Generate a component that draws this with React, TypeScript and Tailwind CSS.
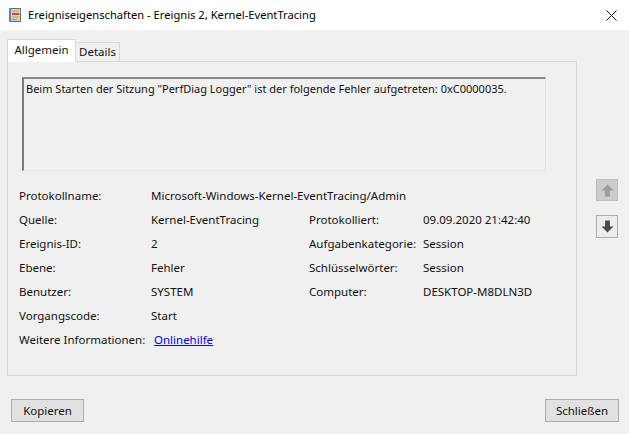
import React from "react";

const font = { fontFamily: '"Noto Sans", "Open Sans", sans-serif' };

function EventIcon() {
  return (
    <svg width="16" height="16" viewBox="0 0 16 16" className="shrink-0">
      <rect x="2.5" y="1.5" width="11" height="13" fill="#c9d3e0" stroke="#5b6e8c" />
      <rect x="2" y="1" width="2" height="14" fill="#6a7fa3" />
      <rect x="5" y="3" width="7" height="2" fill="#e8b84a" />
      <rect x="5" y="6" width="7" height="2" fill="#d9473b" />
      <rect x="5" y="9" width="7" height="2" fill="#e8b84a" />
      <rect x="5" y="12" width="5" height="1" fill="#8a97ad" />
    </svg>
  );
}

function Arrow({ up, color }: { up?: boolean; color: string }) {
  return (
    <svg width="13" height="13" viewBox="0 0 12 12" className={up ? "" : "rotate-180"}>
      <path d="M6 0.5 L11.5 6 H8.2 V11.5 H3.8 V6 H0.5 Z" fill={color} />
    </svg>
  );
}

const rows: [string, string, string?, string?][] = [
  ["Quelle:", "Kernel-EventTracing", "Protokolliert:", "09.09.2020 21:42:40"],
  ["Ereignis-ID:", "2", "Aufgabenkategorie:", "Session"],
  ["Ebene:", "Fehler", "Schlüsselwörter:", "Session"],
  ["Benutzer:", "SYSTEM", "Computer:", "DESKTOP-M8DLN3D"],
  ["Vorgangscode:", "Start"],
];

export default function App() {
  return (
    <div
      className="flex h-[434px] w-[629px] flex-col overflow-hidden bg-[#f0f0f0] text-[11.5px] text-[#111]"
      style={font}
    >
      <div className="flex h-[30px] shrink-0 items-center bg-white pl-[7px] pr-[12px]">
        <EventIcon />
        <span className="ml-[5px] text-[11.2px] text-black">
          Ereigniseigenschaften - Ereignis 2, Kernel-EventTracing
        </span>
        <svg width="11" height="11" viewBox="0 0 11 11" className="ml-auto">
          <path d="M0.5 0.5 L10.5 10.5 M10.5 0.5 L0.5 10.5" stroke="#111" strokeWidth="1" />
        </svg>
      </div>

      <div className="flex pt-[9px]">
        <div className="ml-[7px] flex w-[570px] flex-col">
          <div className="flex h-[22px] items-end">
            <div className="relative z-10 -mb-px flex h-[23px] w-[69px] items-center justify-center border border-b-0 border-[#d9d9d9] bg-white pb-[3px]">
              Allgemein
            </div>
            <div className="flex h-[19px] w-[44px] items-center justify-center border border-b-0 border-l-0 border-[#d9d9d9] bg-[#f0f0f0]">
              Details
            </div>
          </div>
          <div className="flex h-[315px] flex-col border border-[#d9d9d9] bg-[#f0f0f0] pl-[11px] pt-[15px]">
            <div className="ml-[3px] h-[94px] w-[524px] border-l-2 border-t-2 border-b border-r border-l-[#7a7a7a] border-t-[#8a8a8a] border-r-[#e3e3e3] border-b-[#e3e3e3] px-[2px] pt-[2px] text-[11px]">
              Beim Starten der Sitzung "PerfDiag Logger" ist der folgende Fehler aufgetreten: 0xC0000035.
            </div>
            <div className="mt-[13px] grid grid-cols-[132px_158px_114px_1fr] auto-rows-[24px] items-center">
              <span>Protokollname:</span>
              <span className="col-span-3">Microsoft-Windows-Kernel-EventTracing/Admin</span>
              {rows.map(([a, b, c, d]) => (
                <React.Fragment key={a}>
                  <span>{a}</span>
                  <span>{b}</span>
                  <span>{c ?? ""}</span>
                  <span>{d ?? ""}</span>
                </React.Fragment>
              ))}
              <span>Weitere Informationen:</span>
              <span className="col-span-3 pl-[3px]">
                <a href="#" className="text-[#0000ee] underline">
                  Onlinehilfe
                </a>
              </span>
            </div>
          </div>
        </div>

        <div className="ml-[19px] flex flex-col gap-[14px] pt-[140px]">
          <div className="flex h-[22px] w-[22px] items-center justify-center border border-[#bdbdbd] bg-[#cccccc]">
            <Arrow up color="#9c9c9c" />
          </div>
          <div className="flex h-[23px] w-[22px] items-center justify-center border border-[#adadad] bg-[#ececec]">
            <Arrow color="#4a4a4a" />
          </div>
        </div>
      </div>

      <div className="mt-[23px] flex items-center justify-between pl-[11px] pr-[10px]">
        <button className="h-[23px] w-[73px] border border-[#adadad] bg-[#e1e1e1]">Kopieren</button>
        <button className="h-[23px] w-[74px] border border-[#adadad] bg-[#e1e1e1]">Schließen</button>
      </div>
    </div>
  );
}
